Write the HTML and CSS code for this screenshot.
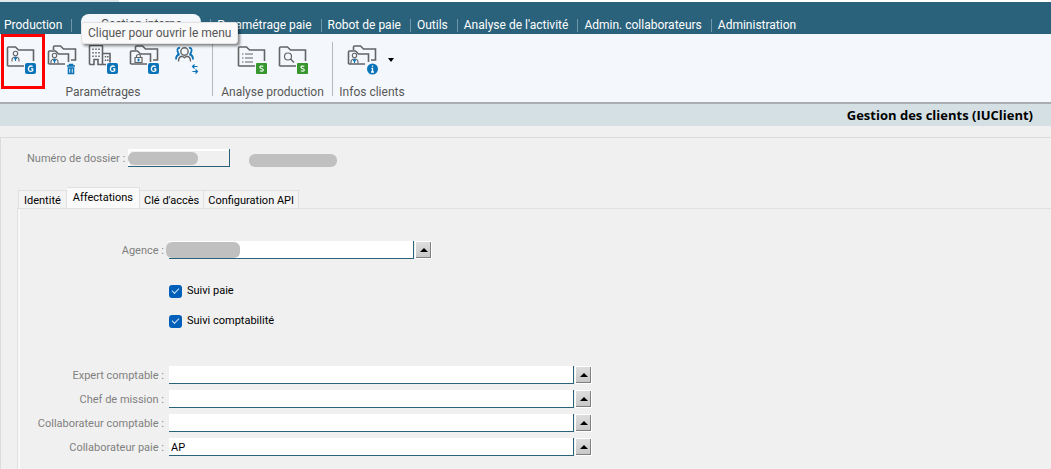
FILE: index.html
```html
<!DOCTYPE html>
<html lang="fr">
<head>
<meta charset="utf-8">
<title>Gestion des clients</title>
<link rel="stylesheet" href="styles.css">
</head>
<body>
<svg class="defs" width="0" height="0" aria-hidden="true">
  <defs>
    <g id="folder"><path d="M1.500 21V3q0-1 1-1h7l3 3h15v11M1.500 21H18" /></g>
    <g id="folders"><path d="M6.500 5V2q0-1 1-1h6l3 3h12v11H24" /><path d="M1.500 19V7q0-1 1-1h6l3 3h10v8M1.500 19H18" /></g>
    <g id="g-badge"><rect x="19" y="18" width="11" height="11" rx="2" fill="#0b74b8" stroke="none"/><path d="M26.700 21.500Q24.500 20.300 23 21.900Q21.700 24 23 25.700Q24.700 27 26.700 25.800V23.900H25" stroke="#fff" stroke-width="1.300"/></g>
    <g id="s-badge"><rect x="19" y="18" width="11" height="11" rx="1" fill="#38962f" stroke="none"/><path d="M26.300 21.300Q23 20.400 23 22.200Q23 23.200 24.600 23.500Q26.500 24 26.300 25.200Q25.500 26.700 22.800 25.800" stroke="#fff" stroke-width="1.200"/></g>
    <g id="person"><circle cx="9.500" cy="8.500" r="2.200" stroke-width="1.100"/><path d="M6 16.500v-1.500q0-3 3.500-3t3.500 3v1.500" stroke-width="1.100"/><path d="M9.500 12v4M8 12.500l1.500 2 1.500-2" stroke="#0b74b8" stroke-width="1.100"/></g>
  </defs>
</svg>
<div class="strip"><span class="strip-tab"></span></div>
<header>
  <nav class="menu">
    <a class="menu-item" href="#">Production</a>
    <a class="menu-item active" href="#">Gestion interne</a>
    <a class="menu-item" href="#">Paramétrage paie</a>
    <a class="menu-item" href="#">Robot de paie</a>
    <a class="menu-item" href="#">Outils</a>
    <a class="menu-item" href="#">Analyse de l'activité</a>
    <a class="menu-item" href="#">Admin. collaborateurs</a>
    <a class="menu-item" href="#">Administration</a>
    <span class="tooltip" role="tooltip">Cliquer pour ouvrir le menu</span>
  </nav>
  <div class="ribbon">
    <section class="group first">
      <div class="tools">
        <button class="tool marked" aria-label="Clients"><svg viewBox="0 0 31 30"><use href="#folder"/><use href="#person"/><use href="#g-badge"/></svg></button>
        <button class="tool" aria-label="Supprimer"><svg viewBox="0 0 31 30"><use href="#folders"/><use href="#person" transform="translate(-2 2)"/><path d="M20 21h8M22.500 21v-1.500h3V21M21.500 23v5.500h5V23zM24 23v5" stroke="#0b74b8" stroke-width="1.600"/></svg></button>
        <button class="tool" aria-label="Agences"><svg viewBox="0 0 31 30"><path d="M1.500 19.500V1.500q0-1 1-1h11q1 0 1 1v18H10v-5H6v5H1.500M14.500 8.500H22v9M14.500 19.500H18"/><path d="M5 3.500v9M8 3.500v9M11 3.500v9M17.500 11v6M19.800 11v6" stroke-dasharray="1.500 2" stroke-width="1.500"/><use href="#g-badge"/></svg></button>
        <button class="tool" aria-label="Accès"><svg viewBox="0 0 31 30"><use href="#folders"/><path d="M6 12.500h7v5H6zM7.500 12.500v-1.500q0-1.500 2-1.500t2 1.500v1.500" stroke-width="1.200"/><path d="M9.500 13.500v3M8.500 15h2" stroke="#0b74b8"/><use href="#g-badge"/></svg></button>
        <button class="tool" aria-label="Transférer un groupe"><svg viewBox="0 0 31 30"><g transform="translate(4 1)"><circle cx="10.500" cy="5.500" r="3.700" stroke-width="1.400"/><path d="M4.500 15.500q0-5 3.500-5.300l2.500 1.400 2.500-1.400q3.500.3 3.500 5.300" stroke-width="1.400"/><path d="M6 2Q3 1.500 3.500 5q.5 3 2 3.500Q2 9 2 13.500M15 2q3-.5 2.500 3-.5 3-2 3.500Q19 9 19 13.500" stroke="#0b74b8" stroke-width="1.800"/><path d="M23.500 20.500h-5M20.500 18.500l-2 2 2 2M18.500 25.500h5M21.500 23.500l2 2-2 2" stroke="#0b74b8" stroke-width="1.200"/></g></svg></button>
      </div>
      <div class="caption">Paramétrages</div>
    </section>
    <section class="group">
      <div class="tools">
        <button class="tool" aria-label="Liste"><svg viewBox="0 0 31 30"><use href="#folder"/><path d="M5 9h1.500M5 13h1.500M5 17h1.500M8 9h8M8 13h8M8 17h8" stroke-width="1.200"/><use href="#s-badge"/></svg></button>
        <button class="tool" aria-label="Recherche"><svg viewBox="0 0 31 30"><use href="#folder"/><circle cx="10" cy="11.500" r="3.500" stroke-width="1.200"/><path d="M12.500 14l3.500 3.500" stroke-width="1.400"/><use href="#s-badge"/></svg></button>
      </div>
      <div class="caption">Analyse production</div>
    </section>
    <section class="group last">
      <div class="tools">
        <button class="tool" aria-label="Infos clients"><svg viewBox="0 0 31 30"><use href="#folders"/><use href="#person" transform="translate(-2 2)"/><circle cx="25.500" cy="24" r="5.500" fill="#0b74b8" stroke="none"/><path d="M25.500 20.500v1.300M24.500 23.500h1v3.500M24 27h3" stroke="#fff" stroke-width="1.300"/></svg></button>
        <button class="more" aria-label="Plus"><svg class="caret" viewBox="0 0 6 4"><path d="M0 0h6L3 4z"/></svg></button>
      </div>
      <div class="caption">Infos clients</div>
    </section>
  </div>
</header>
<h1 class="title">Gestion des clients (IUClient)</h1>
<main class="panel">
  <div class="dossier">
    <label for="dossier">Numéro de dossier :</label>
    <span class="masked small"><input id="dossier" class="field readonly" type="text" readonly></span>
    <span class="mask name"></span>
  </div>
  <div class="tabs" role="tablist">
    <button class="tab" role="tab">Identité</button>
    <button class="tab selected" role="tab" aria-selected="true">Affectations</button>
    <button class="tab" role="tab">Clé d'accès</button>
    <button class="tab" role="tab">Configuration API</button>
  </div>
  <div class="pane">
    <div class="row">
      <label for="agence">Agence :</label>
      <span class="masked agency"><input id="agence" class="field" type="text"></span>
      <button class="pick" aria-label="Choisir l'agence"><svg class="up" viewBox="0 0 8 4"><path d="M4 0l4 4H0z"/></svg></button>
    </div>
    <div class="checks">
      <label class="check"><input type="checkbox" checked>Suivi paie</label>
      <label class="check"><input type="checkbox" checked>Suivi comptabilité</label>
    </div>
    <div class="rows">
      <div class="row"><label for="expert">Expert comptable :</label><input id="expert" class="field wide" type="text"><button class="pick" aria-label="Choisir l'expert"><svg class="up" viewBox="0 0 8 4"><path d="M4 0l4 4H0z"/></svg></button></div>
      <div class="row"><label for="chef">Chef de mission :</label><input id="chef" class="field wide" type="text"><button class="pick" aria-label="Choisir le chef"><svg class="up" viewBox="0 0 8 4"><path d="M4 0l4 4H0z"/></svg></button></div>
      <div class="row"><label for="compta">Collaborateur comptable :</label><input id="compta" class="field wide" type="text"><button class="pick" aria-label="Choisir le collaborateur comptable"><svg class="up" viewBox="0 0 8 4"><path d="M4 0l4 4H0z"/></svg></button></div>
      <div class="row"><label for="paie">Collaborateur paie :</label><input id="paie" class="field wide" type="text" value="AP"><button class="pick" aria-label="Choisir le collaborateur paie"><svg class="up" viewBox="0 0 8 4"><path d="M4 0l4 4H0z"/></svg></button></div>
    </div>
  </div>
</main>
</body>
</html>
```
FILE: styles.css
```css
*, *::before, *::after { box-sizing: border-box; }
body {
  margin: 0;
  min-height: 100vh;
  display: flex;
  flex-direction: column;
  background: #f0f0f0;
  color: #000;
  font: 11px/14px Roboto, "Noto Sans", sans-serif;
}
button, input { font: inherit; color: inherit; margin: 0; padding: 0; border: 0; background: none; }
.defs { position: absolute; }
.strip { height: 2px; background: #fff; }
.strip-tab { display: block; width: 119px; height: 2px; background: #e0e8eb; }

.menu {
  position: relative;
  display: flex;
  align-items: flex-end;
  height: 32px;
  background: #2a627c;
  font: 12px/16px Roboto, "Noto Sans", sans-serif;
}
.menu-item {
  display: flex;
  align-items: center;
  height: 20px;
  padding: 2px 0 0 6px;
  color: #fff;
  text-decoration: none;
  white-space: nowrap;
}
.menu-item:first-child { padding-left: 4px; }
.menu-item:not(:last-of-type)::after {
  content: "";
  width: 1px;
  height: 13px;
  margin-left: 9px;
  background: #6f96a8;
}
.menu-item.active {
  justify-content: center;
  width: 120px;
  margin: 0 9px;
  padding: 0;
  border-radius: 8px 8px 0 0;
  background: #f4f8fd;
  color: #505050;
}
.menu-item.active::after { display: none; }
.menu-item.active + .menu-item::before {
  content: "";
  width: 1px;
  height: 13px;
  margin: 0 6px 0 -6px;
  background: #6f96a8;
}
.tooltip {
  position: absolute;
  z-index: 2;
  left: 81px;
  top: 20px;
  padding: 2px 6px;
  border: 1px solid #e2e2e2;
  border-radius: 3px;
  background: #f9f9f9;
  color: #575757;
  box-shadow: 2px 2px 3px #0007;
  white-space: nowrap;
}

.ribbon {
  display: flex;
  padding-top: 8px;
  height: 70px;
  border-bottom: 2px solid #a9adb2;
  background: #f4f8fd;
  color: #575757;
  font: 12px/16px Roboto, "Noto Sans", sans-serif;
}
.group {
  display: flex;
  flex-direction: column;
  align-items: center;
  height: 54px;
  width: 120px;
  border-right: 1px solid #b4b8bc;
}
.group.first { width: 213px; padding-right: 6px; }
.group.last { width: 78px; border: 0; }
.tools { display: flex; flex-shrink: 0; height: 42px; }
.tool { position: relative; width: 41px; height: 36px; }
.tool svg {
  display: block;
  width: 31px;
  height: 30px;
  margin: 0 auto;
  fill: none;
  stroke: #626466;
  stroke-width: 1.600;
}
.marked::after {
  content: "";
  position: absolute;
  left: 0;
  top: -8px;
  width: 44px;
  height: 55px;
  border: 3px solid #f00;
}
.caption { white-space: nowrap; }
.more { width: 16px; height: 36px; }
.group.last .tools { margin-left: -4px; }
.caret { display: block; width: 6px; height: 4px; margin: 0 auto; fill: #000; }

.title {
  margin: 0;
  padding: 3px 18px 3px 8px;
  background: #d5e0e5;
  font: bold 13px/16px "Open Sans", "Noto Sans", sans-serif;
  text-align: right;
}
.panel {
  display: flex;
  flex: 1;
  flex-direction: column;
  margin-top: 11px;
  border: solid #dcdcdc;
  border-width: 1px 0 0 1px;
}
.dossier { display: flex; align-items: center; padding: 11px 0 0 26px; color: #808080; }
.dossier label { width: 101px; padding-top: 2px; white-space: nowrap; }
.field {
  display: block;
  width: 100%;
  height: 18px;
  padding: 1px 2px 0;
  border: solid #2a627c;
  border-width: 0 1px 1px 0;
  background: #fff;
  color: #000;
}
.readonly { background: #f0f0f0; box-shadow: inset 2px 2px #fff; }
.masked { position: relative; }
.masked::before {
  content: "";
  position: absolute;
  border-radius: 6px;
  background: #c0c0c0;
}
.small { width: 102px; }
.small::before { left: 0; top: 3px; width: 70px; height: 13px; }
.agency { width: 245px; }
.agency::before { left: -3px; top: 1px; width: 74px; height: 16px; }
.mask { height: 13px; border-radius: 6px; background: #c0c0c0; }
.name { width: 88px; margin: 4px 0 0 19px; }

.tabs { display: flex; align-items: flex-end; margin: 20px 0 0 17px; }
.tab {
  height: 18px;
  padding: 2px 4px 0;
  border: solid #e0e0e0;
  border-width: 1px 1px 0 0;
  background: #f3f3f3;
}
.tab:first-child { border-left-width: 1px; padding: 2px 5px 0; }
.tab.selected { height: 21px; padding: 0 6px; background: #fafafa; }
.pane {
  flex: 1;
  margin-left: 16px;
  padding-top: 32px;
  border: solid #e0e0e0;
  border-width: 1px 0 0 1px;
  box-shadow: inset 2px 0 #f8f8f8;
}
.row { display: flex; gap: 1px; }
.row label { width: 147px; height: 18px; padding-right: 1px; margin-right: 3px; line-height: 20px; text-align: right; color: #808080; white-space: nowrap; }
.wide { width: 405px; }
.pick {
  display: grid;
  place-items: center;
  width: 17px;
  height: 18px;
  border: 1px solid #fff;
  background: linear-gradient(#dedede, #c6c6c6);
  box-shadow: inset -1px -1px #808080;
}
.up { width: 8px; height: 4px; fill: #000; }
.checks { display: flex; flex-direction: column; align-items: flex-start; gap: 14px; margin: 24px 0 37px 151px; }
.check { display: flex; align-items: center; gap: 5px; line-height: 16px; }
.check input {
  appearance: none;
  display: grid;
  place-items: center;
  width: 13px;
  height: 13px;
  border-radius: 3px;
  background: #005fb8;
}
.check input::before {
  content: "";
  width: 7px;
  height: 4px;
  margin-bottom: 2px;
  border: solid #d4e6f6;
  border-width: 0 0 1px 1px;
  transform: rotate(-45deg);
}
.rows { display: flex; flex-direction: column; gap: 6px; }
```
